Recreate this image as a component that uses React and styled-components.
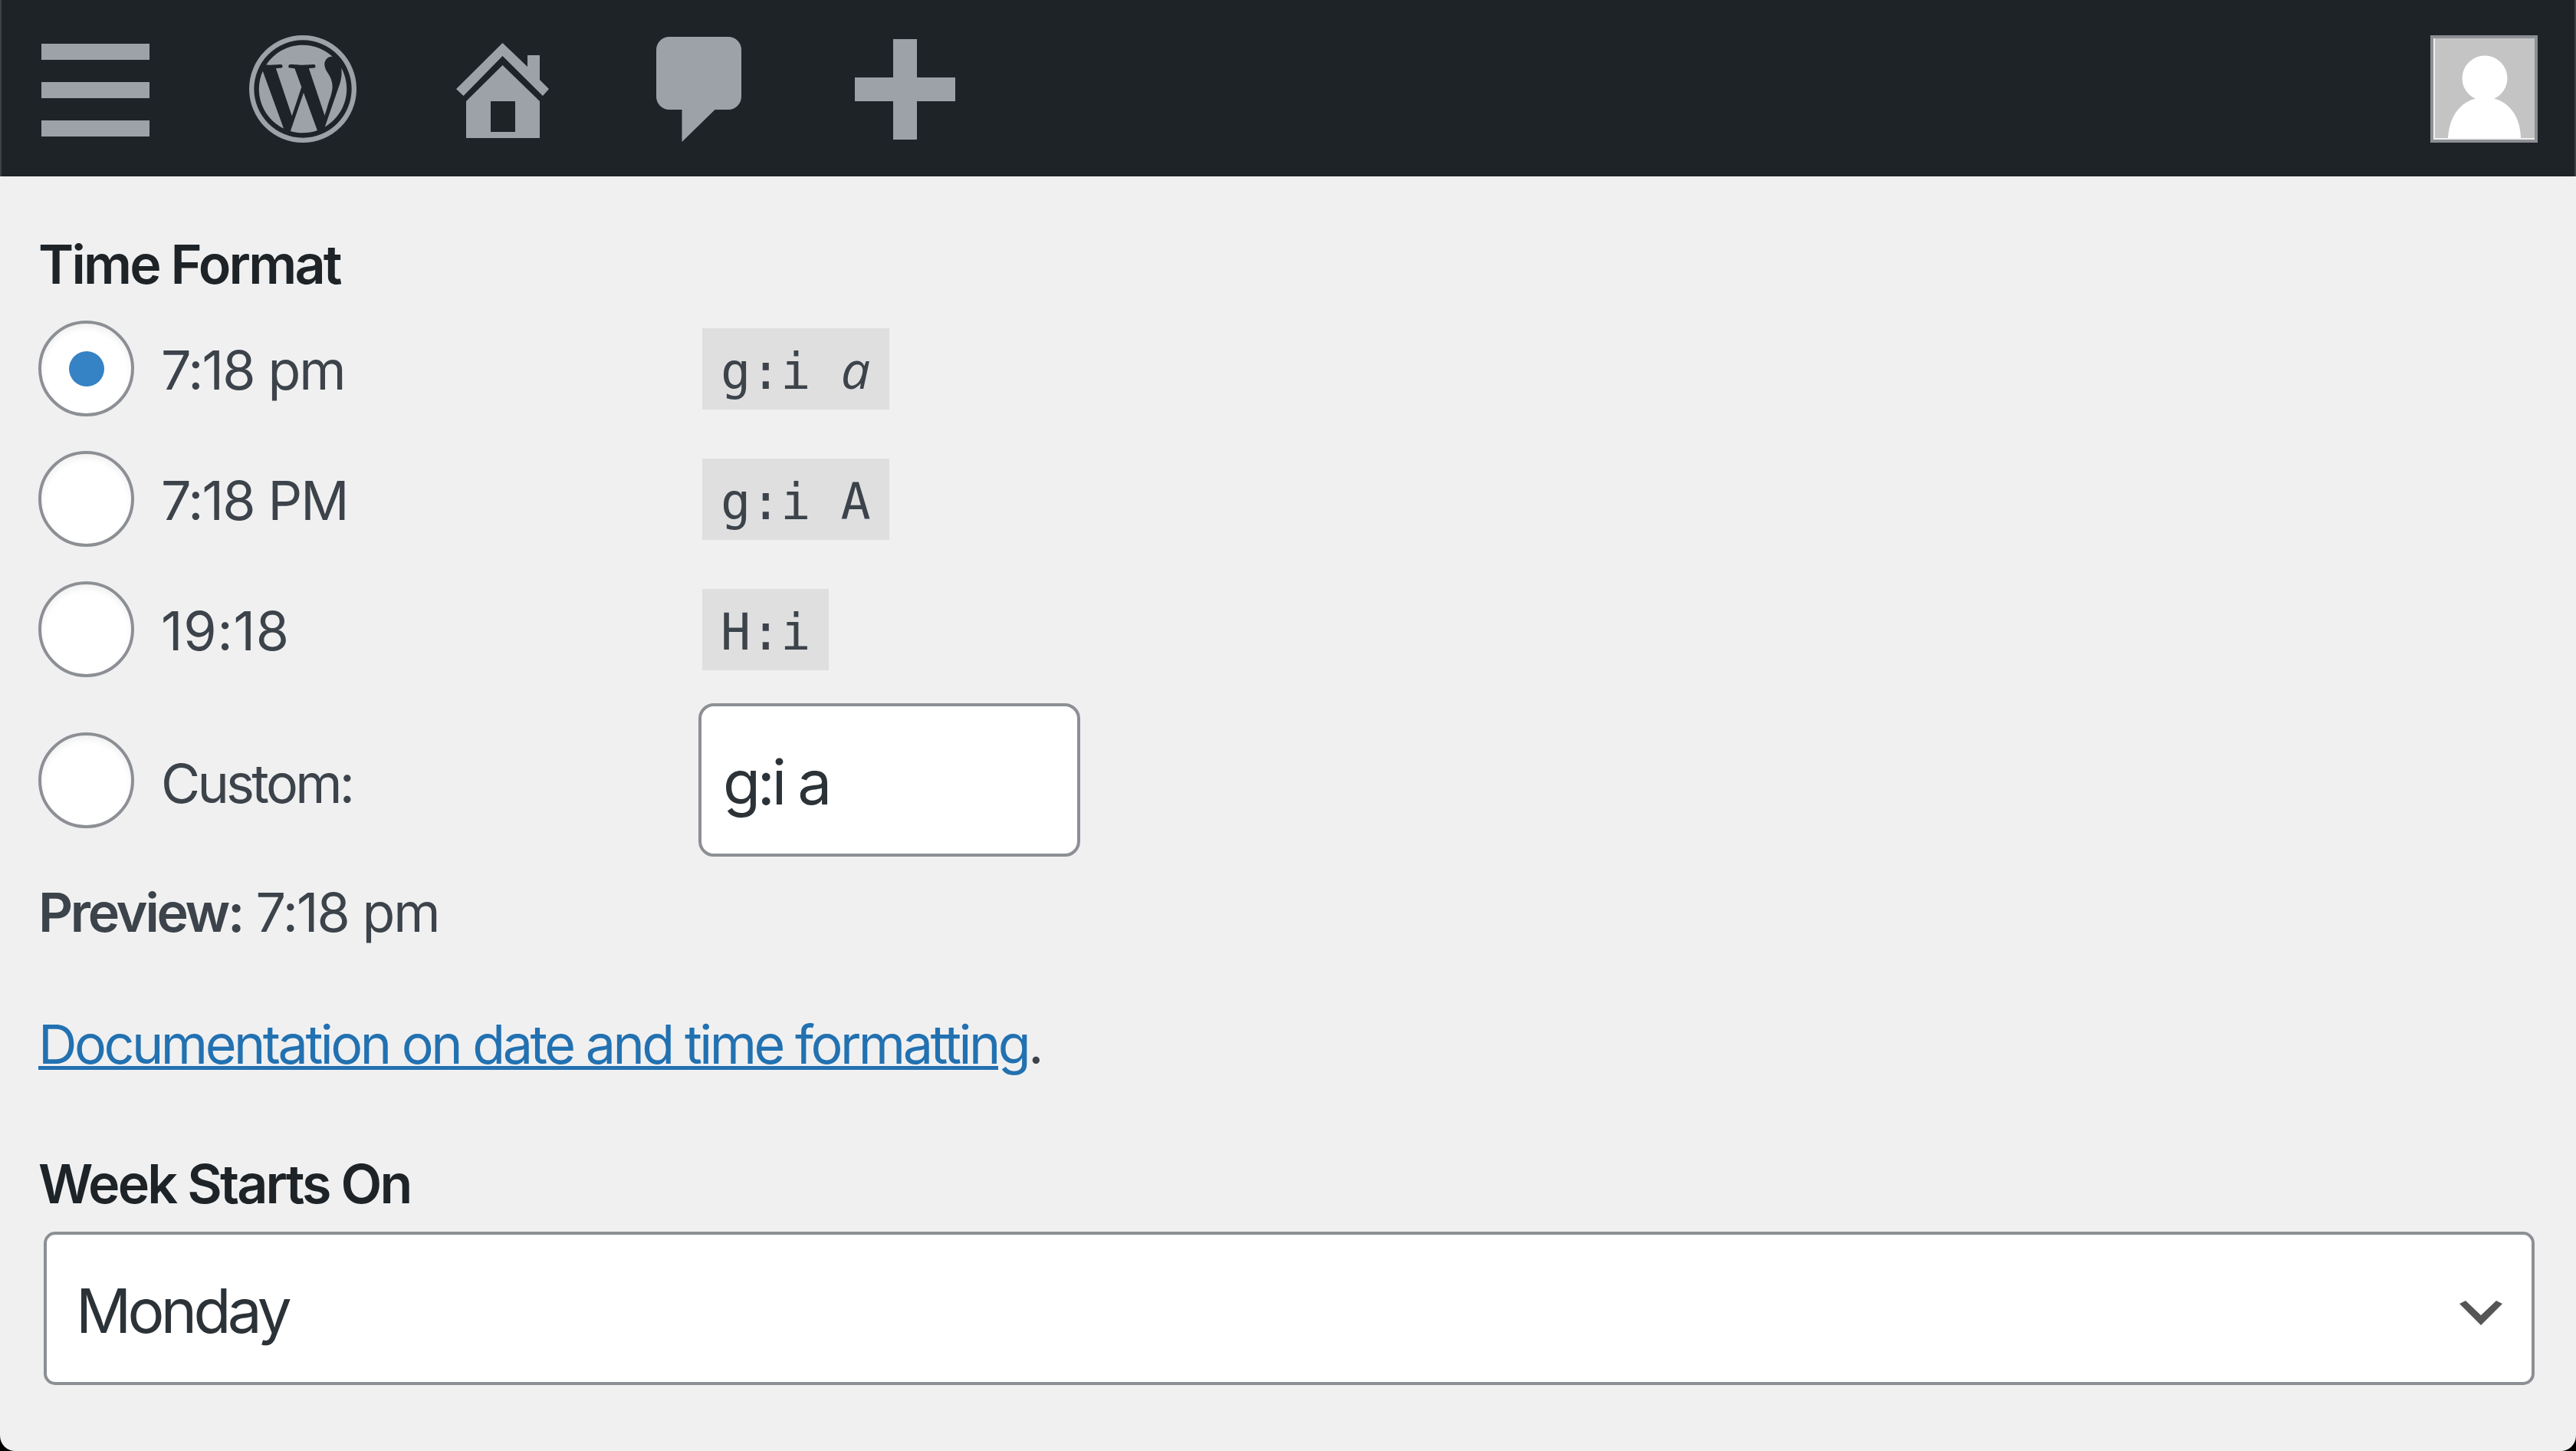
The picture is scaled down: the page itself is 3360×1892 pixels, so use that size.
import React from "react";
import styled, { createGlobalStyle } from "styled-components";

const GlobalStyle = createGlobalStyle`
  html, body {
    margin: 0;
    padding: 0;
    background: #000;
  }
  * {
    box-sizing: border-box;
  }
`;

const Page = styled.div`
  width: 3360px;
  height: 1892px;
  overflow: hidden;
  background: #f0f0f1;
  border-radius: 0 0 20px 20px;
  font-family: Inter, "Liberation Sans", sans-serif;
  color: #3c434a;
`;

const AdminBar = styled.header`
  height: 230px;
  background: #1d2327;
  border-left: 2px solid #3c4347;
  border-right: 2px solid #3c4347;
  display: flex;
  align-items: flex-start;
  padding-left: 52px;
  padding-right: 48px;
`;

const BarIcon = styled.svg`
  display: block;
  flex: none;
  margin-left: ${(p) => p.$left}px;
  margin-top: ${(p) => p.$top}px;
  fill: #9ca2a7;
`;

const Avatar = styled.div`
  margin-left: auto;
  margin-top: 46px;
  width: 140px;
  height: 140px;
  border: 4px solid #8c8f94;
  background: #f0f0f1;
  padding: 0 0 2px 2px;
`;

const AvatarArt = styled.svg`
  display: block;
  width: 100%;
  height: 100%;
`;

const Form = styled.main`
  padding: 0 50px;
  display: flex;
  flex-direction: column;
`;

const Heading = styled.h2`
  margin: ${(p) => p.$top}px 0 0;
  font-size: 70px;
  line-height: 90px;
  font-weight: 600;
  letter-spacing: -2.8px;
  color: #1d2327;
`;

const Row = styled.label`
  display: flex;
  align-items: center;
  margin-top: ${(p) => p.$top}px;
  height: ${(p) => p.$height}px;
`;

const Radio = styled.span`
  flex: none;
  width: 125px;
  height: 125px;
  border-radius: 50%;
  border: 4px solid #8c8f94;
  background: #fff;
  box-shadow: inset 0 5px 8px rgba(0, 0, 0, 0.06);
  display: flex;
  align-items: center;
  justify-content: center;
  &::before {
    content: "";
    display: ${(p) => (p.$checked ? "block" : "none")};
    width: 46px;
    height: 46px;
    border-radius: 50%;
    background: #3582c4;
  }
`;

const RowLabel = styled.span`
  flex: none;
  width: 706px;
  margin-left: 35px;
  padding-top: ${(p) => p.$drop}px;
  font-size: 70px;
  line-height: 90px;
  letter-spacing: ${(p) => p.$track}px;
`;

const Code = styled.code`
  display: block;
  height: 106px;
  padding: 8px 24px 0;
  background: #dfdfe0;
  font-family: "DejaVu Sans Mono", monospace;
  font-size: 65px;
  line-height: 98px;
  white-space: pre;
`;

/* the reference's mono face has a single-storey "a" */
const CodeSlantA = styled.span`
  display: inline-block;
  width: 39px;
  text-align: center;
  line-height: 1;
  font-family: "Open Sans", sans-serif;
  font-style: italic;
  font-weight: 500;
  font-size: 68px;
`;

const TextInput = styled.div`
  margin-left: -5px;
  width: 498px;
  height: 200px;
  border: 4px solid #8c8f94;
  border-radius: 20px;
  background: #fff;
  padding: 4px 28px 0;
  display: flex;
  align-items: center;
  font-size: 80px;
  letter-spacing: -4.2px;
  color: #2c3338;
`;

const Line = styled.p`
  margin: ${(p) => p.$top}px 0 0;
  font-size: 70px;
  line-height: 90px;
  letter-spacing: ${(p) => p.$track}px;
`;

const Strong = styled.strong`
  font-weight: 600;
  letter-spacing: -3.3px;
`;

const DocLink = styled.a`
  color: #2271b1;
  text-decoration: underline;
  text-decoration-thickness: 5px;
`;

const SelectBox = styled.div`
  margin: 17px 0 0 7px;
  width: 3249px;
  height: 200px;
  border: 4px solid #8c8f94;
  border-radius: 15px;
  background: #fff;
  padding: 4px 38px 0;
  display: flex;
  align-items: center;
  justify-content: space-between;
  font-size: 80px;
  letter-spacing: -4.7px;
  color: #2c3338;
`;

const Chevron = styled.svg`
  display: block;
  margin-top: 8px;
  fill: #555;
`;

function App() {
  return (
    <Page>
      <GlobalStyle />
      <AdminBar>
        <BarIcon $left={0} $top={57} width="141" height="121" viewBox="0 0 141 121">
          <rect width="141" height="21" />
          <rect y="50" width="141" height="21" />
          <rect y="100" width="141" height="21" />
        </BarIcon>
        <BarIcon $left={130} $top={46} width="140" height="140" viewBox="1 1 22 22">
          <path
            fillRule="evenodd"
            d="M12 1a11 11 0 1 0 0 22a11 11 0 1 0 0-22zM12 2a10 10 0 1 1 0 20a10 10 0 1 1 0-20z"
          />
          <path d="M12.158 12.786l-2.698 7.84c.806.236 1.657.365 2.54.365 1.047 0 2.051-.18 2.986-.51-.024-.037-.046-.078-.065-.123l-2.763-7.572zM3.009 12c0 3.559 2.068 6.634 5.067 8.092L3.788 8.341c-.5 1.119-.779 2.357-.779 3.659zm15.06-.454c0-1.112-.399-1.881-.741-2.48-.456-.741-.883-1.368-.883-2.109 0-.826.627-1.596 1.51-1.596.04 0 .078.005.116.007-1.6-1.466-3.732-2.36-6.072-2.36-3.141 0-5.904 1.612-7.512 4.052.211.007.41.011.579.011.94 0 2.396-.114 2.396-.114.484-.028.541.683.057.74 0 0-.487.058-1.029.086l3.274 9.739 1.968-5.901-1.401-3.838c-.484-.028-.943-.086-.943-.086-.485-.029-.428-.769.057-.741 0 0 1.484.114 2.368.114.94 0 2.397-.114 2.397-.114.485-.028.542.683.057.74 0 0-.488.058-1.029.086l3.249 9.665.897-2.996c.456-1.169.684-2.137.684-2.907zm1.82-3.86c.039.286.06.593.06.924 0 .912-.171 1.938-.684 3.22l-2.746 7.94c2.673-1.558 4.47-4.454 4.47-7.771 0-1.564-.399-3.034-1.1-4.313z" />
        </BarIcon>
        <BarIcon $left={130} $top={56} width="121" height="124" viewBox="0 0 121 124">
          <path d="M60.500 0 L93 31 V16 H109 V48 L121 60 L113 69 L60.500 17 L9.500 69 L0 60 Z" />
          <path fillRule="evenodd" d="M60.500 29 L109 76 V124 H13 V76 Z M45 76 V116 H77 V76 Z" />
        </BarIcon>
        <BarIcon $left={140} $top={48} width="111" height="137" viewBox="0 0 111 137">
          <path d="M17 0H94A17 17 0 0 1 111 17V78A17 17 0 0 1 94 95H76.500L33.500 137V95H17A17 17 0 0 1 0 78V17A17 17 0 0 1 17 0Z" />
        </BarIcon>
        <BarIcon $left={148} $top={51} width="131" height="131" viewBox="0 0 131 131">
          <path d="M50 0H81V50H131V81H81V131H50V81H0V50H50Z" />
        </BarIcon>
        <Avatar>
          <AvatarArt viewBox="0 0 130 130" preserveAspectRatio="none">
            <rect width="130" height="130" fill="#c4c4c4" />
            <circle cx="65" cy="52" r="29.500" fill="#fff" />
            <path d="M17 130C19 95 40 77 65 77S111 95 112 130Z" fill="#fff" />
          </AvatarArt>
        </Avatar>
      </AdminBar>
      <Form>
        <Heading $top={70}>Time Format</Heading>
        <Row $top={28} $height={125}>
          <Radio $checked />
          <RowLabel $drop={4} $track={-1.9}>7:18 pm</RowLabel>
          <Code>g:i <CodeSlantA>a</CodeSlantA></Code>
        </Row>
        <Row $top={45} $height={125}>
          <Radio />
          <RowLabel $drop={4} $track={-1.9}>7:18 PM</RowLabel>
          <Code>g:i A</Code>
        </Row>
        <Row $top={45} $height={125}>
          <Radio />
          <RowLabel $drop={4} $track={0.8}>19:18</RowLabel>
          <Code>H:i</Code>
        </Row>
        <Row $top={34} $height={200}>
          <Radio />
          <RowLabel $drop={10} $track={-3.7}>Custom:</RowLabel>
          <TextInput>g:i a</TextInput>
        </Row>
        <Line $top={28} $track={-2}>
          <Strong>Preview:</Strong> 7:18 pm
        </Line>
        <Line $top={82} $track={-3.5}>
          <DocLink>Documentation on date and time formatting</DocLink>.
        </Line>
        <Heading $top={92}>Week Starts On</Heading>
        <SelectBox>
          Monday
          <Chevron width="56" height="32" viewBox="0 0 56 32">
            <path d="M0 4 L8 0 L28 19 L48 0 L56 4 L28 32 Z" />
          </Chevron>
        </SelectBox>
      </Form>
    </Page>
  );
}

export default App;
